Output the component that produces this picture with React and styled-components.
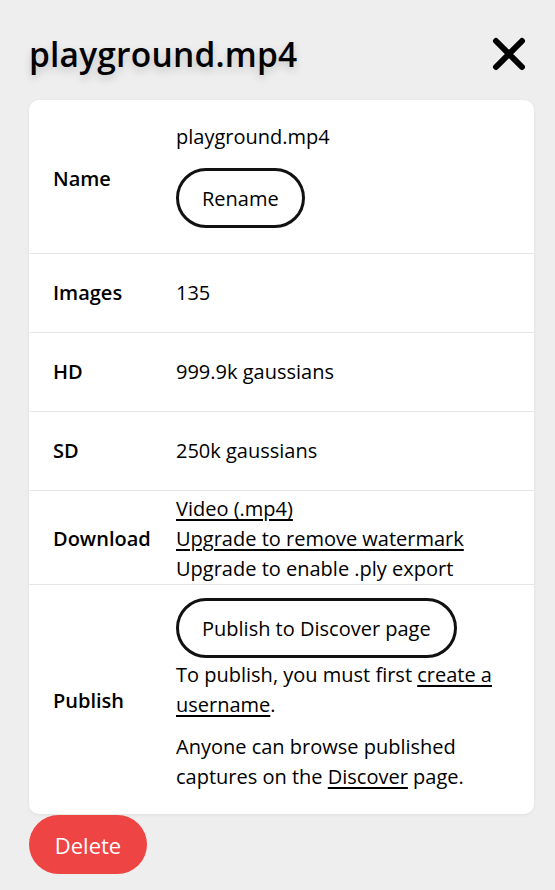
import React from "react";
import styled, { createGlobalStyle } from "styled-components";

const Global = createGlobalStyle`
  html, body { margin: 0; padding: 0; background: #eeeeee; }
  body { font-family: "Open Sans", "Noto Sans", sans-serif; color: #000; }
  * { box-sizing: border-box; }
`;

const Page = styled.div`
  padding: 20px 28px 0 29px;
  width: 555px;
`;

const Header = styled.div`
  display: flex;
  align-items: center;
  justify-content: space-between;
  height: 80px;
  padding-bottom: 12px;
`;

const Title = styled.h1`
  margin: 0;
  font-size: 33.5px;
  font-weight: 600;
  line-height: 40px;
  letter-spacing: 0.2px;
  text-shadow: 0 4px 8px rgba(0, 0, 0, 0.18);
`;

const CloseButton = styled.button`
  border: none;
  background: transparent;
  padding: 0;
  width: 40px;
  height: 40px;
  display: flex;
  align-items: center;
  justify-content: center;
  margin-right: -2px;
  cursor: pointer;
`;

const Card = styled.div`
  background: #fff;
  border-radius: 10px;
  box-shadow: 0 1px 4px rgba(0, 0, 0, 0.06);
  width: 505px;
`;

const Row = styled.div`
  display: grid;
  grid-template-columns: 147px 1fr;
  align-items: center;
  border-bottom: ${(p) => (p.$last ? "none" : "1px solid #e6e6e6")};
  padding: ${(p) => p.$pad || "24px 0"};
`;

const Label = styled.div`
  padding-left: 24px;
  padding-top: ${(p) => p.$drop || 0}px;
  font-size: 20px;
  font-weight: 600;
  line-height: 30px;
`;

const Value = styled.div`
  font-size: 20px;
  line-height: 30px;
  display: flex;
  flex-direction: column;
  align-items: flex-start;
  gap: ${(p) => p.$gap || "0px"};
  padding-right: 20px;
`;

const Para = styled.p`
  margin: ${(p) => (p.$spaced ? "10px 0 0" : "0")};
`;

const Link = styled.a`
  color: #000;
  text-decoration: underline;
  text-decoration-thickness: 2px;
  text-underline-offset: 3px;
  cursor: pointer;
`;

const OutlineButton = styled.button`
  font-family: inherit;
  font-size: 20px;
  color: #000;
  background: #fff;
  border: 3px solid #111;
  border-radius: 30px;
  height: 60px;
  padding: 0 23px;
  cursor: pointer;
`;

const DeleteButton = styled.button`
  font-family: inherit;
  font-size: 22px;
  color: #fff;
  background: #ef4444;
  border: none;
  border-radius: 30px;
  width: 118px;
  height: 59px;
  margin-top: 1px;
  cursor: pointer;
`;

export default function App() {
  return (
    <>
      <Global />
      <Page>
        <Header>
          <Title>playground.mp4</Title>
          <CloseButton aria-label="Close">
            <svg width="36" height="36" viewBox="0 0 36 36">
              <path d="M5 5 L31 31 M31 5 L5 31" stroke="#000" strokeWidth="6" strokeLinecap="round" />
            </svg>
          </CloseButton>
        </Header>
        <Card>
          <Row $pad="22px 0 25px">
            <Label $drop={8}>Name</Label>
            <Value $gap="16px">
              <span>playground.mp4</span>
              <OutlineButton>Rename</OutlineButton>
            </Value>
          </Row>
          <Row>
            <Label>Images</Label>
            <Value>135</Value>
          </Row>
          <Row>
            <Label>HD</Label>
            <Value>999.9k gaussians</Value>
          </Row>
          <Row>
            <Label>SD</Label>
            <Value>250k gaussians</Value>
          </Row>
          <Row $pad="3px 0 0">
            <Label>Download</Label>
            <Value>
              <Link>Video (.mp4)</Link>
              <Link>Upgrade to remove watermark</Link>
              <span>Upgrade to enable .ply export</span>
            </Value>
          </Row>
          <Row $pad="13px 0 22px" $last>
            <Label $drop={12}>Publish</Label>
            <Value $gap="2px">
              <OutlineButton>Publish to Discover page</OutlineButton>
              <Para>
                To publish, you must first <Link>create a username</Link>.
              </Para>
              <Para $spaced>
                Anyone can browse published captures on the <Link>Discover</Link> page.
              </Para>
            </Value>
          </Row>
        </Card>
        <DeleteButton>Delete</DeleteButton>
      </Page>
    </>
  );
}
